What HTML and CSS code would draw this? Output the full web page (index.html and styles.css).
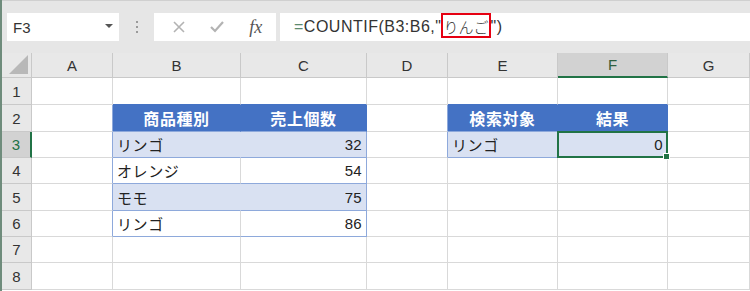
FILE: index.html
```html
<!DOCTYPE html>
<html lang="ja">
<head>
    <meta charset="UTF-8">
    <title>COUNTIF</title>
    <link rel="stylesheet" href="styles.css">
</head>
<body>
    <div class="app">
        <div class="toolbar">
            <div class="namebox">
                <span>F3</span>
                <span class="arrow"></span>
            </div>
            <div class="dots"><i></i><i></i><i></i></div>
            <div class="fnbox">
                <svg width="14" height="14" viewBox="0 0 14 14"><path d="M2 2 L12 12 M12 2 L2 12" stroke="#b3b3b3" stroke-width="1.6" fill="none"/></svg>
                <svg width="16" height="14" viewBox="0 0 16 14"><path d="M2 7 L6 11 L14 2" stroke="#b3b3b3" stroke-width="2.2" fill="none"/></svg>
                <span class="fx">fx</span>
            </div>
            <div class="formula">
                <span class="eq">=</span>COUNTIF(B3:B6,"<span class="mark">りんご</span>")
            </div>
        </div>

        <div class="sheet">
            <div class="hd corner"></div>
            <div class="hd">A</div>
            <div class="hd">B</div>
            <div class="hd">C</div>
            <div class="hd">D</div>
            <div class="hd">E</div>
            <div class="hd sel-col">F</div>
            <div class="hd">G</div>

            <div class="rh">1</div>
            <div class="c"></div>
            <div class="c top-edge"></div>
            <div class="c top-edge"></div>
            <div class="c"></div>
            <div class="c top-edge"></div>
            <div class="c top-edge"></div>
            <div class="c"></div>

            <div class="rh">2</div>
            <div class="c left-edge"></div>
            <div class="c th">商品種別</div>
            <div class="c th">売上個数</div>
            <div class="c left-edge"></div>
            <div class="c th">検索対象</div>
            <div class="c th">結果</div>
            <div class="c"></div>

            <div class="rh sel-row">3</div>
            <div class="c left-edge"></div>
            <div class="c band first">リンゴ</div>
            <div class="c band last num">32</div>
            <div class="c left-edge"></div>
            <div class="c band first">リンゴ</div>
            <div class="c band last num active">0<span class="handle"></span></div>
            <div class="c"></div>

            <div class="rh">4</div>
            <div class="c left-edge"></div>
            <div class="c row first">オレンジ</div>
            <div class="c row last num">54</div>
            <div class="c"></div>
            <div class="c"></div>
            <div class="c"></div>
            <div class="c"></div>

            <div class="rh">5</div>
            <div class="c left-edge"></div>
            <div class="c band first">モモ</div>
            <div class="c band last num">75</div>
            <div class="c"></div>
            <div class="c"></div>
            <div class="c"></div>
            <div class="c"></div>

            <div class="rh">6</div>
            <div class="c left-edge"></div>
            <div class="c row first">リンゴ</div>
            <div class="c row last num">86</div>
            <div class="c"></div>
            <div class="c"></div>
            <div class="c"></div>
            <div class="c"></div>

            <div class="rh">7</div>
            <div class="c"></div>
            <div class="c"></div>
            <div class="c"></div>
            <div class="c"></div>
            <div class="c"></div>
            <div class="c"></div>
            <div class="c"></div>

            <div class="rh">8</div>
            <div class="c"></div>
            <div class="c"></div>
            <div class="c"></div>
            <div class="c"></div>
            <div class="c"></div>
            <div class="c"></div>
            <div class="c"></div>
        </div>
    </div>
</body>
</html>
```

FILE: styles.css
```css
body {
    margin: 0;
    background: #ffffff;
    font-family: "Liberation Sans", "Noto Sans CJK JP", sans-serif;
    color: #222;
}
.app {
    width: 750px;
    height: 291px;
    box-sizing: border-box;
    border-left: 2px solid #6f8c7c;
    overflow: hidden;
}
.toolbar {
    height: 53px;
    box-sizing: border-box;
    background: #e6e6e6;
    border-top: 1px solid #d0d0d0;
    padding-top: 12px;
    display: flex;
    align-items: flex-start;
}
.namebox {
    margin-left: 5px;
    width: 112px;
    height: 28px;
    box-sizing: border-box;
    background: #fff;
    display: flex;
    align-items: center;
    justify-content: space-between;
    padding: 0 6px 0 6px;
    font-size: 15px;
    color: #333;
}
.arrow {
    width: 0;
    height: 0;
    border-left: 4px solid transparent;
    border-right: 4px solid transparent;
    border-top: 4px solid #555;
    margin-top: -3px;
}
.dots {
    width: 35px;
    height: 28px;
    display: flex;
    flex-direction: column;
    align-items: center;
    justify-content: center;
    gap: 3px;
}
.dots i {
    width: 2px;
    height: 2px;
    background: #9a9a9a;
}
.fnbox {
    width: 122px;
    height: 28px;
    background: #fff;
    display: flex;
    align-items: center;
    justify-content: space-around;
    padding: 0 2px 0 6px;
    box-sizing: border-box;
}
.fx {
    font-family: "Liberation Serif", "DejaVu Serif", serif;
    font-style: italic;
    font-size: 18px;
    color: #555;
}
.formula {
    margin-left: 4px;
    flex: 1;
    height: 28px;
    background: #fff;
    box-sizing: border-box;
    padding-left: 14px;
    font-size: 16px;
    letter-spacing: 0.5px;
    line-height: 28px;
    color: #333;
    white-space: nowrap;
}
.formula .eq {
    color: #5c8a6f;
}
.mark {
    display: inline-block;
    height: 25px;
    line-height: 25px;
    box-sizing: border-box;
    border: 2px solid #e60012;
    padding: 0;
    letter-spacing: 0;
    font-size: 15px;
    vertical-align: top;
    font-weight: 300;
}
.sheet {
    display: grid;
    grid-template-columns: 30px 81px 128px 126px 81px 110px 110px 82px;
    grid-template-rows: 25px 27px 27px 26px 26px 27px 26px 26px 27px;
    font-size: 15px;
}
.sheet > div {
    box-sizing: border-box;
    border-right: 1px solid #d9d9d9;
    border-bottom: 1px solid #d9d9d9;
}
.hd {
    background: #e8e8e8;
    border-color: #c9c9c9 !important;
    display: flex;
    align-items: center;
    justify-content: center;
    color: #333;
    font-size: 15px;
}
.corner {
    position: relative;
}
.corner::after {
    content: "";
    position: absolute;
    right: 3px;
    bottom: 3px;
    border-left: 19px solid transparent;
    border-bottom: 19px solid #b8b8b8;
}
.sel-col {
    background: #d2d2d2;
    color: #2d5e3e;
    border-bottom: 2px solid #217346 !important;
}
.rh {
    background: #e8e8e8;
    border-color: #c9c9c9 !important;
    display: flex;
    align-items: center;
    justify-content: center;
    color: #333;
}
.sel-row {
    background: #d2d2d2;
    color: #217346;
    border-right: 2px solid #217346 !important;
}
.c {
    display: flex;
    align-items: center;
    padding: 0 4px;
    letter-spacing: 0.6px;
    white-space: nowrap;
}
.top-edge {
    border-bottom-color: #4472c4 !important;
}
.left-edge {
    border-right-color: #8ea9db !important;
}
.th {
    background: #4472c4;
    color: #fff;
    font-weight: bold;
    font-size: 16px;
    justify-content: center;
    border-color: #4472c4 !important;
    border-bottom-color: #8ea9db !important;
}
.band {
    background: #d9e1f2;
    border-bottom-color: #8ea9db !important;
}
.row {
    border-bottom-color: #8ea9db !important;
}
.band.first {
    border-right-color: #d9e1f2 !important;
}
.last {
    border-right-color: #8ea9db !important;
}
.num {
    justify-content: flex-end;
    letter-spacing: 0.3px;
}
.active {
    position: relative;
    border: 2px solid #217346 !important;
    margin: -1px 0 0 -1px;
    padding-right: 3px;
}
.handle {
    position: absolute;
    right: -4px;
    bottom: -4px;
    width: 5px;
    height: 5px;
    background: #217346;
    border: 1px solid #fff;
}
```
